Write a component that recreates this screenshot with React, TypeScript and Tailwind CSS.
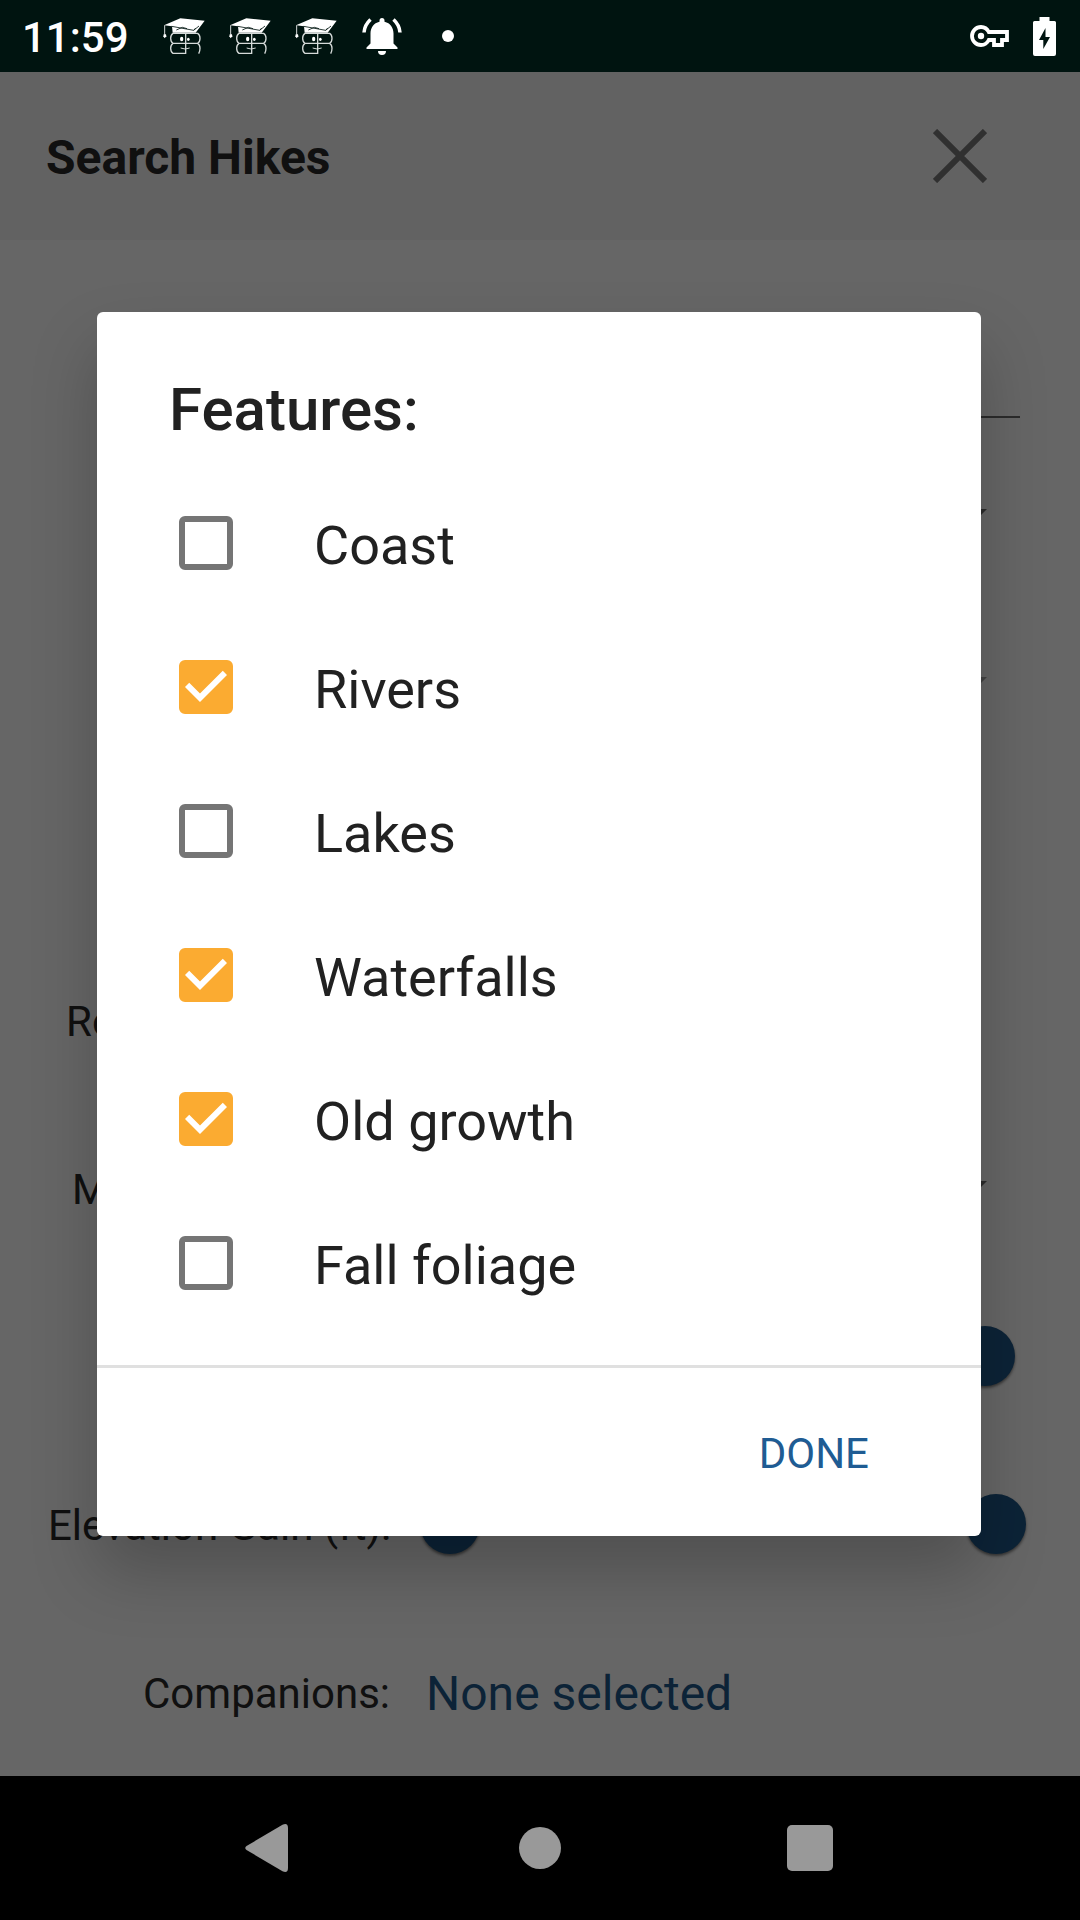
import { useState } from "react";
import type { ReactNode } from "react";

const initialFeatures = [
  { name: "Coast", checked: false },
  { name: "Rivers", checked: true },
  { name: "Lakes", checked: false },
  { name: "Waterfalls", checked: true },
  { name: "Old growth", checked: true },
  { name: "Fall foliage", checked: false },
];

function GraduateIcon() {
  return (
    <svg className="h-9 w-[42px]" viewBox="0 0 126 108" fill="none" aria-hidden="true">
      <path d="M3 22L52 1L125 8L98 44H29L27 25Z" fill="#fff" />
      <path d="M26 25L92 37L108 24M40 36L58 28L72 32M92 37L98 30" stroke="#001410" strokeWidth="2.5" />
      <path d="M5 22V50" stroke="#d5dad9" strokeWidth="3" />
      <path d="M2 49H9L10 55L5 61L1 55Z" fill="#fff" />
      <path
        d="M68 46V106M30 46H104Q111 50 111 61Q111 72 104 76H30Q23 72 23 61Q23 50 30 46ZM30 76Q23 80 23 91Q23 102 30 106H70M104 76Q111 80 111 91Q111 100 107 107"
        stroke="#d5dad9"
        strokeWidth="4"
      />
      <ellipse cx="56" cy="63" rx="5" ry="7" fill="#fff" />
      <ellipse cx="76" cy="64" rx="4" ry="5" fill="#fff" />
      <path d="M53 90Q66 96 80 90" stroke="#d5dad9" strokeWidth="3" />
    </svg>
  );
}

function BellIcon() {
  return (
    <svg className="h-[38px] w-[42px]" viewBox="0 0 42 38" aria-hidden="true">
      <path
        d="M18.5 3.5a2.5 2.5 0 0 1 5 0v1.2C29.400 6 32.500 11 32.500 16.500V26.500L36.500 30.500V32H5.500V30.500L9.500 26.500V16.500C9.500 11 12.600 6 18.500 4.700ZM17 34H25a4 4 0 0 1-8 0Z"
        fill="#fff"
      />
      <path d="M9.500 2.500Q3.500 8 3 15.500M32.500 2.500Q38.500 8 39 15.500" stroke="#fff" strokeWidth="3.500" fill="none" />
    </svg>
  );
}

function KeyIcon() {
  return (
    <svg className="h-[22px] w-[39px]" viewBox="0 0 39 22" aria-hidden="true">
      <path
        d="M11 2A9 9 0 1 0 11 20C14.600 20 17.200 18.200 18.800 15H24V20H32V15H37V7H18.800C17.200 3.800 14.600 2 11 2Z"
        fill="none"
        stroke="#fff"
        strokeWidth="3.800"
      />
      <circle cx="11" cy="11" r="3.200" fill="#fff" />
    </svg>
  );
}

function BatteryIcon() {
  return (
    <svg className="h-[39px] w-[23px]" viewBox="0 0 23 39" aria-hidden="true">
      <path
        d="M6.500 0H16.500V4H21.500Q23 4 23 5.500V37Q23 39 21 39H2Q0 39 0 37V5.500Q0 4 1.500 4H6.500ZM12.500 11L6 23H10.300V32L17 20H12.500Z"
        fill="#fff"
      />
    </svg>
  );
}

function StatusBar() {
  return (
    <header className="flex h-[72px] shrink-0 items-center bg-[#001410] pr-6 pl-[22px] text-white">
      <time className="w-[141px] pt-1 text-[42px] leading-[48px] font-medium">11:59</time>
      <div className="flex items-center gap-6">
        <GraduateIcon />
        <GraduateIcon />
        <GraduateIcon />
        <BellIcon />
        <span className="mx-[15px] size-3 rounded-full bg-white" />
      </div>
      <div className="ml-auto flex items-center gap-6">
        <KeyIcon />
        <BatteryIcon />
      </div>
    </header>
  );
}

function Row({ label, children }: { label?: ReactNode; children?: ReactNode }) {
  return (
    <div className="grid h-[168px] grid-cols-[342px_1fr] items-center gap-x-[30px]">
      <span className="pt-1 text-right text-[42px] leading-[48px] whitespace-nowrap">{label}</span>
      <div className="flex min-w-0 items-center">{children}</div>
    </div>
  );
}

function Dropdown({ label, muted = false }: { label: string; muted?: boolean }) {
  return (
    <div className="mr-[39px] flex grow items-center">
      <select aria-label={label} className="h-[72px] grow appearance-none" />
      <svg
        className={muted ? "h-[15px] w-[30px] text-[#a8a8a8]" : "h-[15px] w-[30px] text-[#6b6b6b]"}
        viewBox="0 0 30 15"
        fill="currentColor"
        aria-hidden="true"
      >
        <path d="M0 0H30L15 15Z" />
      </svg>
    </div>
  );
}

const thumb =
  "h-[60px] min-w-0 flex-1 appearance-none bg-transparent [&::-webkit-slider-thumb]:size-[60px] [&::-webkit-slider-thumb]:appearance-none [&::-webkit-slider-thumb]:rounded-full [&::-webkit-slider-thumb]:bg-[#1e588a] [&::-webkit-slider-thumb]:shadow-[0_2px_3px_rgba(0,0,0,0.5)]";

function RangeField({ label, high }: { label: string; high: number }) {
  return (
    <>
      <input type="range" aria-label={label + " from"} min={0} max={200} defaultValue={0} className={thumb} />
      <input type="range" aria-label={label + " to"} min={0} max={200} defaultValue={high} className={thumb} />
    </>
  );
}

function SearchForm() {
  return (
    <form className="pt-6 pr-[54px] pl-12 text-[#2a2a2a]">
      <Row>
        <input type="text" aria-label="Title" className="mr-1.5 h-[140px] grow border-b-2 border-[#6b6b6b]" />
      </Row>
      <Row>
        <Dropdown label="Region" />
      </Row>
      <Row>
        <Dropdown label="Subregion" muted />
      </Row>
      <Row />
      <Row label={<span className="inline-block w-[324px] text-left">Re</span>} />
      <Row label={<span className="inline-block w-[318px] text-left">M</span>}>
        <Dropdown label="Month" />
      </Row>
      <Row>
        <RangeField label="Length" high={191} />
      </Row>
      <Row label="Elevation Gain (ft):">
        <RangeField label="Elevation gain" high={200} />
      </Row>
      <Row label="Companions:">
        <button type="button" className="ml-1.5 pt-1 text-[48px] leading-[56px] text-[#1e588a]">
          None selected
        </button>
      </Row>
    </form>
  );
}

function FeaturesDialog() {
  const [features, setFeatures] = useState(initialFeatures);
  const toggle = (name: string) =>
    setFeatures(features.map((f) => (f.name === name ? { ...f, checked: !f.checked } : f)));

  return (
    <div
      role="dialog"
      aria-labelledby="features-title"
      className="grow rounded-md bg-white text-[#212121] shadow-[0_36px_66px_rgba(0,0,0,0.22)]"
    >
      <h2 id="features-title" className="px-[72px] pt-[63px] text-[60px] leading-[70px] font-medium">
        Features:
      </h2>
      <ul className="pt-[26px] pb-[30px]">
        {features.map((f) => (
          <li key={f.name}>
            <label className="flex h-36 items-center gap-[81px] px-[82px]">
              <span className="relative size-[54px]">
                <input
                  type="checkbox"
                  checked={f.checked}
                  onChange={() => toggle(f.name)}
                  className="block size-[54px] appearance-none rounded-md border-6 border-[#757575] checked:border-[#fbab31] checked:bg-[#fbab31]"
                />
                {f.checked && (
                  <svg className="pointer-events-none absolute inset-0" viewBox="3 3 18 18" fill="#fff" aria-hidden="true">
                    <path d="M10 17l-5-5 1.410-1.410L10 14.170l7.590-7.590L19 8z" />
                  </svg>
                )}
              </span>
              <span className="pt-1.5 text-[54px] leading-[64px]">{f.name}</span>
            </label>
          </li>
        ))}
      </ul>
      <div className="flex h-[171px] items-center justify-end border-t-3 border-[#e0e0e0] pr-28">
        <button type="button" className="pt-1 text-[42px] leading-[48px] text-[#1f5c93]">
          DONE
        </button>
      </div>
    </div>
  );
}

function NavigationBar() {
  return (
    <nav className="grid h-36 shrink-0 grid-cols-3 items-center justify-items-center bg-black px-[12.5%]">
      <button type="button" aria-label="Back" className="pr-2">
        <svg className="h-12 w-[43px]" viewBox="0 0 43 48" fill="#999" aria-hidden="true">
          <path d="M1.500 22L37.500 0.800Q43 -1.500 43 4V44Q43 49.500 37.500 47.200L1.500 26Q-1 24 1.500 22Z" />
        </svg>
      </button>
      <button type="button" aria-label="Home" className="size-[42px] rounded-full bg-[#999]" />
      <button type="button" aria-label="Recent apps" className="size-[46px] rounded-[5px] bg-[#999]" />
    </nav>
  );
}

export default function App() {
  return (
    <div className="flex min-h-screen flex-col font-[Roboto,sans-serif]">
      <StatusBar />
      <main className="relative grow bg-white">
        <div className="flex h-[168px] items-center justify-between bg-[#f5f5f5] pr-[93px] pl-[46px]">
          <h1 className="pt-1 text-[48px] leading-[56px] font-bold text-[#2a2a2a]">Search Hikes</h1>
          <button type="button" aria-label="Close">
            <svg className="size-[54px]" viewBox="0 0 54 54" fill="none" stroke="#787878" strokeWidth="6" aria-hidden="true">
              <path d="M2 2L52 52M52 2L2 52" />
            </svg>
          </button>
        </div>
        <SearchForm />
        <div className="absolute inset-0 flex items-center bg-black/60 pr-[99px] pl-[97px]">
          <FeaturesDialog />
        </div>
      </main>
      <NavigationBar />
    </div>
  );
}
